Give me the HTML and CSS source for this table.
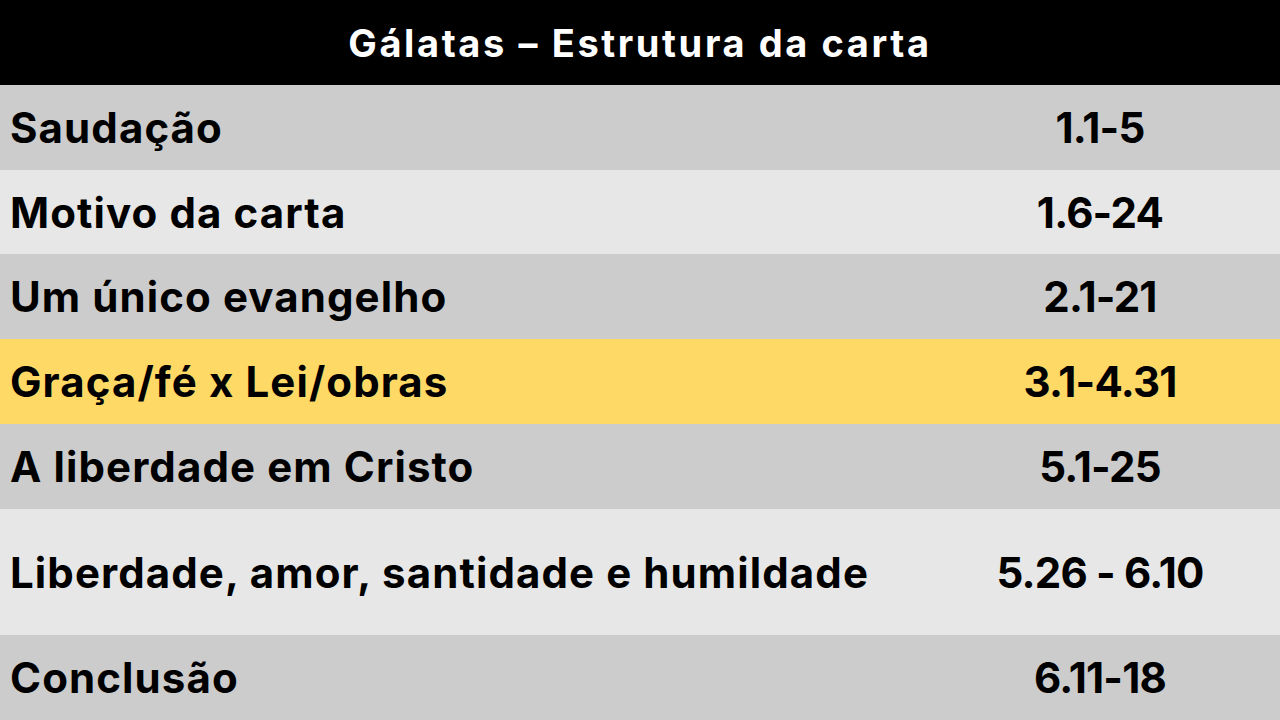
FILE: index.html
```html
<!DOCTYPE html>
<html lang="pt">
<head>
<meta charset="utf-8">
<title>Gálatas – Estrutura da carta</title>
<link rel="stylesheet" href="styles.css">
</head>
<body>
<div class="sheet">
  <div class="header">Gálatas – Estrutura da carta</div>
  <div class="row dark h85"><div class="label">Saudação</div><div class="ref">1.1-5</div></div>
  <div class="row light h84"><div class="label">Motivo da carta</div><div class="ref">1.6-24</div></div>
  <div class="row dark h85"><div class="label">Um único evangelho</div><div class="ref">2.1-21</div></div>
  <div class="row yellow h85"><div class="label">Graça/fé x Lei/obras</div><div class="ref">3.1-4.31</div></div>
  <div class="row dark h85"><div class="label">A liberdade em Cristo</div><div class="ref">5.1-25</div></div>
  <div class="row light h126"><div class="label">Liberdade, amor, santidade e humildade</div><div class="ref">5.26 - 6.10</div></div>
  <div class="row dark h85"><div class="label">Conclusão</div><div class="ref">6.11-18</div></div>
</div>
</body>
</html>
```
FILE: styles.css
```css
html, body {
  margin: 0;
  padding: 0;
  background: #cccccc;
}
body {
  width: 1280px;
  height: 720px;
  overflow: hidden;
  font-family: Inter, "Open Sans", "DejaVu Sans", sans-serif;
  font-weight: 700;
  color: #000;
}
.sheet {
  display: flex;
  flex-direction: column;
  width: 1280px;
}
.header {
  height: 85px;
  background: #000;
  color: #fff;
  display: flex;
  align-items: center;
  justify-content: center;
  font-size: 38px;
  letter-spacing: 2.6px;
}
.row {
  display: grid;
  grid-template-columns: 920px 360px;
  align-items: center;
  font-size: 42px;
}
.h84 { height: 84px; }
.h85 { height: 85px; }
.h126 { height: 126px; }
.dark { background: #cccccc; }
.light { background: #e7e7e7; }
.yellow { background: #ffd966; }
.label {
  padding-left: 10px;
  white-space: nowrap;
  letter-spacing: 1.1px;
}
.ref {
  text-align: center;
  white-space: nowrap;
  letter-spacing: -0.8px;
}
```
